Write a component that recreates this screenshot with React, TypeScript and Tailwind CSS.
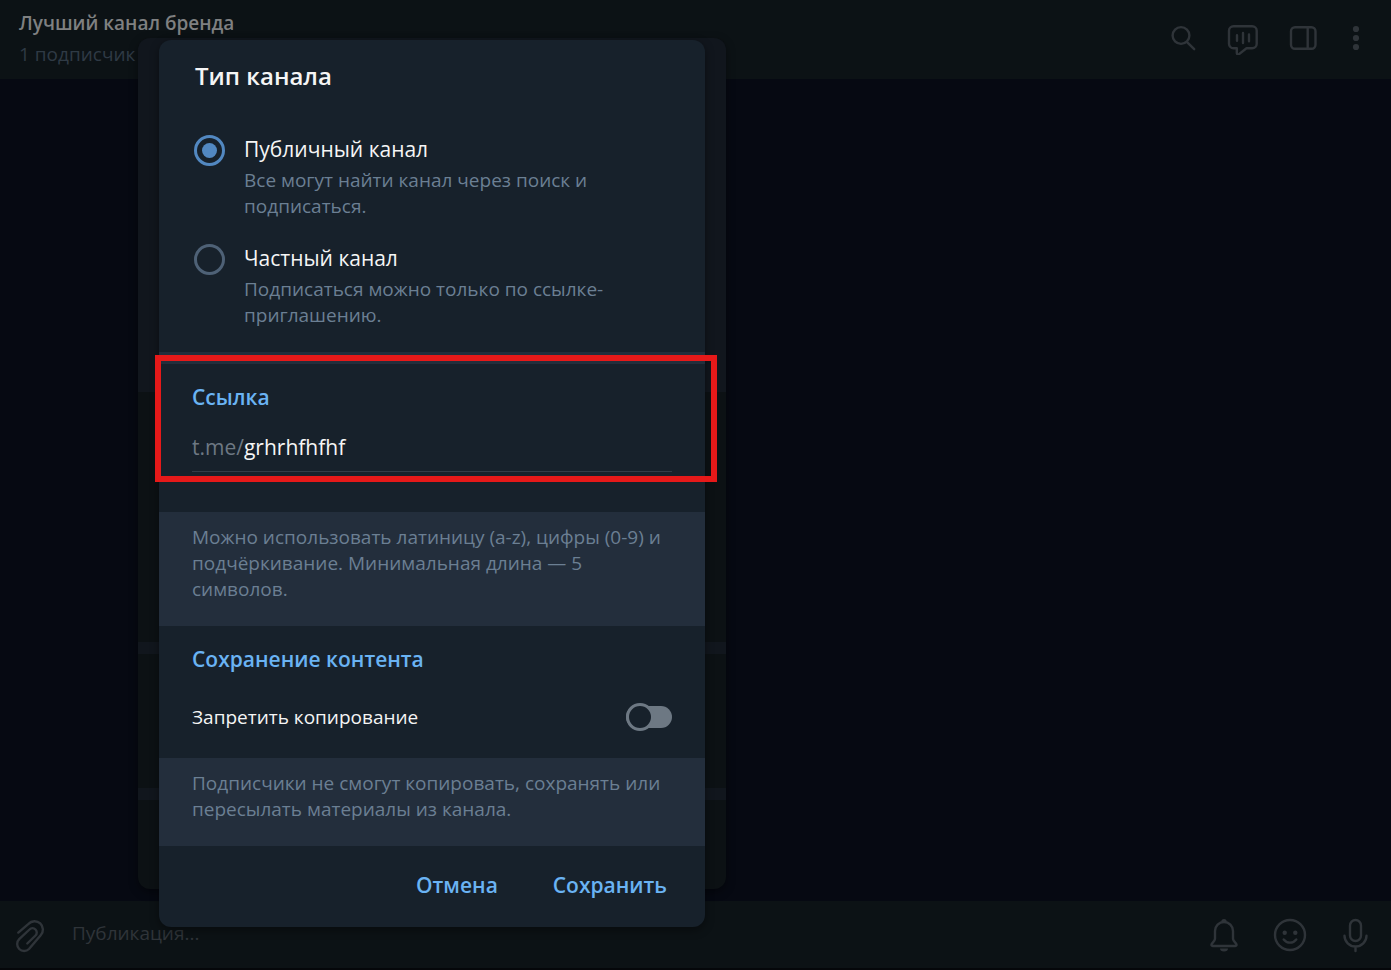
import { useState } from "react";
import type { ReactNode } from "react";

const IconButton = ({ label, children }: { label: string; children: ReactNode }) => (
  <button type="button" aria-label={label} className="block shrink-0">
    {children}
  </button>
);

const iconProps = {
  fill: "none",
  stroke: "currentColor",
  strokeWidth: 2.4,
  strokeLinecap: "round",
  strokeLinejoin: "round",
} as const;

const Header = () => (
  <header className="flex items-center justify-between border-b border-[#0c1215] bg-[#0c1215] py-2 pr-[26px] pl-[19px]">
    <div>
      <h1 className="text-[19px] leading-[31px] font-semibold text-[#7f8081]">
        Лучший канал бренда
      </h1>
      <p className="text-[19px] leading-[31px] text-[#2f3a45]">1 подписчик</p>
    </div>
    <div className="flex items-center gap-7 text-[#2f3439]">
      <IconButton label="Поиск">
        <svg width="32" height="32" viewBox="0 0 32 32" {...iconProps}>
          <circle cx="14" cy="12.5" r="8.4" />
          <path d="M20.3 19.3l6.9 6.9" />
        </svg>
      </IconButton>
      <IconButton label="Трансляция">
        <svg width="32" height="32" viewBox="0 0 32 32" {...iconProps}>
          <path d="M6.5 3.3h18.7a4.5 4.5 0 0 1 4.5 4.5v13a4.500 4.500 0 0 1-4.500 4.500H19.500L12 31.200q-2 1-2.200-1.200v-4.700H6.500A4.500 4.500 0 0 1 2 20.800v-13A4.500 4.500 0 0 1 6.500 3.300z" />
          <path d="M10 12.300v5.400M16 10v10M22 11.500v6.700" />
        </svg>
      </IconButton>
      <IconButton label="Боковая панель">
        <svg width="32" height="32" viewBox="0 0 32 32" {...iconProps}>
          <rect x="4" y="4.3" width="24.5" height="21.5" rx="4" />
          <path d="M20.7 4.3v21.5" />
        </svg>
      </IconButton>
      <IconButton label="Меню">
        <svg width="18" height="32" viewBox="0 0 18 32" fill="currentColor">
          <circle cx="9" cy="6" r="3.1" />
          <circle cx="9" cy="15" r="3.1" />
          <circle cx="9" cy="24" r="3.1" />
        </svg>
      </IconButton>
    </div>
  </header>
);

const Composer = () => (
  <footer className="flex items-center border-b-2 border-[#05070a] bg-[#0c1215] pt-4 pr-[17px] pb-[15px] pl-[13px] text-[#2f3439]">
    <IconButton label="Прикрепить файл">
      <svg width="36" height="36" viewBox="0 0 36 36" {...iconProps}>
        <path d="M5.3 15.6L15.500 6.900a8 8 0 0 1 12.200 11.300L16 32a6.900 6.900 0 0 1-9.800-9.800L16.500 12.500a4.200 4.200 0 0 1 6 6l-8.200 8" />
      </svg>
    </IconButton>
    <input
      type="text"
      aria-label="Публикация"
      placeholder="Публикация..."
      className="ml-[23px] min-w-0 flex-1 bg-transparent pb-1 text-[19px] leading-[30px] outline-none placeholder:text-[#2f3439]"
    />
    <div className="flex items-center gap-[30px]">
      <IconButton label="Уведомления">
        <svg width="36" height="36" viewBox="0 0 36 36" {...iconProps}>
          <path d="M18 5a9 9 0 0 0-9 9v7.5q0 1-.6 2L5.7 27q-.8 2 1 2h22.600q1.800 0 1-2l-2.700-3.500q-.6-1-.6-2V14a9 9 0 0 0-9-9z" />
          <path d="M16.5 4.6a1.500 1.500 0 0 1 3 0z" fill="currentColor" />
          <path d="M14 31.500h8a4 3 0 0 1-8 0z" fill="currentColor" stroke="none" />
        </svg>
      </IconButton>
      <IconButton label="Эмодзи">
        <svg width="36" height="36" viewBox="0 0 36 36" {...iconProps}>
          <circle cx="18" cy="18" r="15" />
          <circle cx="12.7" cy="15.7" r="2.2" fill="currentColor" stroke="none" />
          <circle cx="23.3" cy="15.7" r="2.2" fill="currentColor" stroke="none" />
          <path d="M11.7 22.5c3.3 4.2 9.3 4.2 12.6 0" />
        </svg>
      </IconButton>
      <IconButton label="Голосовое сообщение">
        <svg width="36" height="36" viewBox="0 0 36 36" {...iconProps}>
          <rect x="12" y="3" width="11" height="21" rx="5.5" />
          <path d="M6.5 18.7a11 10.8 0 0 0 22 0M17.5 29.5V34" />
        </svg>
      </IconButton>
    </div>
  </footer>
);

type RadioOptionProps = {
  value: string;
  title: string;
  text: string;
  checked: boolean;
  onSelect: (value: string) => void;
};

const RadioOption = ({ value, title, text, checked, onSelect }: RadioOptionProps) => (
  <label className="flex items-start gap-[19px]">
    <input
      type="radio"
      name="channel-type"
      value={value}
      checked={checked}
      onChange={() => onSelect(value)}
      className="grid size-[31px] shrink-0 appearance-none place-content-center rounded-full border-3 border-[#4e6176] before:size-[15px] before:rounded-full checked:border-[#5288c1] checked:before:bg-[#5288c1]"
    />
    <span className="pb-[2px]">
      <span className="block text-[21px] leading-[28px] text-[#f5f5f5]">{title}</span>
      <span className="mt-1 block text-[19px] leading-[26px] text-[#6b7f93]">{text}</span>
    </span>
  </label>
);

const Note = ({ children }: { children: ReactNode }) => (
  <p className="bg-[#232e3c] px-[33px] pt-3 pb-6 text-[19px] leading-[26px] text-[#6b7f93]">
    {children}
  </p>
);

const ChannelTypeDialog = () => {
  const [type, setType] = useState("public");
  const [link, setLink] = useState("grhrhfhfhf");
  const [noCopy, setNoCopy] = useState(false);

  return (
    <form
      role="dialog"
      aria-labelledby="dialog-title"
      onSubmit={(e) => e.preventDefault()}
      className="absolute inset-x-[21px] top-[2px] rounded-xl bg-[#17212b] shadow-[0_3px_10px_rgba(0,0,0,0.4)]"
    >
      <h2
        id="dialog-title"
        className="px-9 pt-5 text-[24px] leading-8 font-semibold text-[#f5f5f5]"
      >
        Тип канала
      </h2>

      <div className="flex flex-col gap-[23px] px-[35px] pt-[43px] pb-[22px]">
        <RadioOption
          value="public"
          title="Публичный канал"
          text="Все могут найти канал через поиск и подписаться."
          checked={type === "public"}
          onSelect={setType}
        />
        <RadioOption
          value="private"
          title="Частный канал"
          text="Подписаться можно только по ссылке-приглашению."
          checked={type === "private"}
          onSelect={setType}
        />
      </div>

      <div className="h-3 bg-[#232e3c]" />

      <section className="relative px-[33px] pt-[18px] pb-10">
        <h3 className="text-[21px] leading-[30px] font-semibold text-[#6ab3f3]">Ссылка</h3>
        <div className="mt-5 flex border-b border-[#323d48] pb-[9px] text-[21px] leading-[30px]">
          <label htmlFor="link" className="text-[#6d7883]">
            t.me/
          </label>
          <input
            id="link"
            type="text"
            value={link}
            onChange={(e) => setLink(e.target.value)}
            className="min-w-0 flex-1 bg-transparent text-[#f5f5f5] outline-none"
          />
        </div>
        <div className="pointer-events-none absolute -top-[9px] -right-[12px] -left-[4px] bottom-[30px] border-6 border-[#e61919]" />
      </section>

      <Note>
        Можно использовать латиницу (a-z), цифры (0-9) и подчёркивание. Минимальная длина — 5
        символов.
      </Note>

      <section className="px-[33px] pt-[18px] pb-[26px]">
        <h3 className="text-[21px] leading-[30px] font-semibold text-[#6ab3f3]">
          Сохранение контента
        </h3>
        <label className="mt-7 flex items-center justify-between">
          <span className="text-[19px] leading-[30px] text-[#f5f5f5]">Запретить копирование</span>
          <input
            type="checkbox"
            role="switch"
            checked={noCopy}
            onChange={(e) => setNoCopy(e.target.checked)}
            className="relative h-7 w-[46px] appearance-none before:absolute before:inset-x-0 before:inset-y-[3px] before:rounded-full before:bg-[#6d7883] after:absolute after:top-0 after:left-0 after:size-7 after:rounded-full after:border-3 after:border-[#6d7883] after:bg-[#17212b] checked:after:right-0 checked:after:left-auto"
          />
        </label>
      </section>

      <Note>
        Подписчики не смогут копировать, сохранять или пересылать материалы из канала.
      </Note>

      <div className="flex justify-end gap-[55px] px-[38px] pt-6 pb-[27px] text-[21px] leading-[30px] font-semibold text-[#6ab3f3]">
        <button type="button">Отмена</button>
        <button type="submit">Сохранить</button>
      </div>
    </form>
  );
};

export default function App() {
  return (
    <div className="relative flex min-h-screen flex-col bg-[#060912] font-['Open_Sans','Noto_Sans',sans-serif]">
      <Header />
      <main className="flex-1" />
      <Composer />

      <div className="absolute top-[38px] bottom-[81px] left-[138px] flex w-[588px] flex-col rounded-xl bg-[#0c1114] shadow-[0_3px_10px_rgba(0,0,0,0.4)]">
        <div className="h-[354px] rounded-t-xl bg-[#11161d]" />
        <div className="h-[250px]" />
        <div className="h-3 bg-[#11161d]" />
        <div className="h-[134px]" />
        <div className="h-3 bg-[#11161d]" />
        <ChannelTypeDialog />
      </div>
    </div>
  );
}
